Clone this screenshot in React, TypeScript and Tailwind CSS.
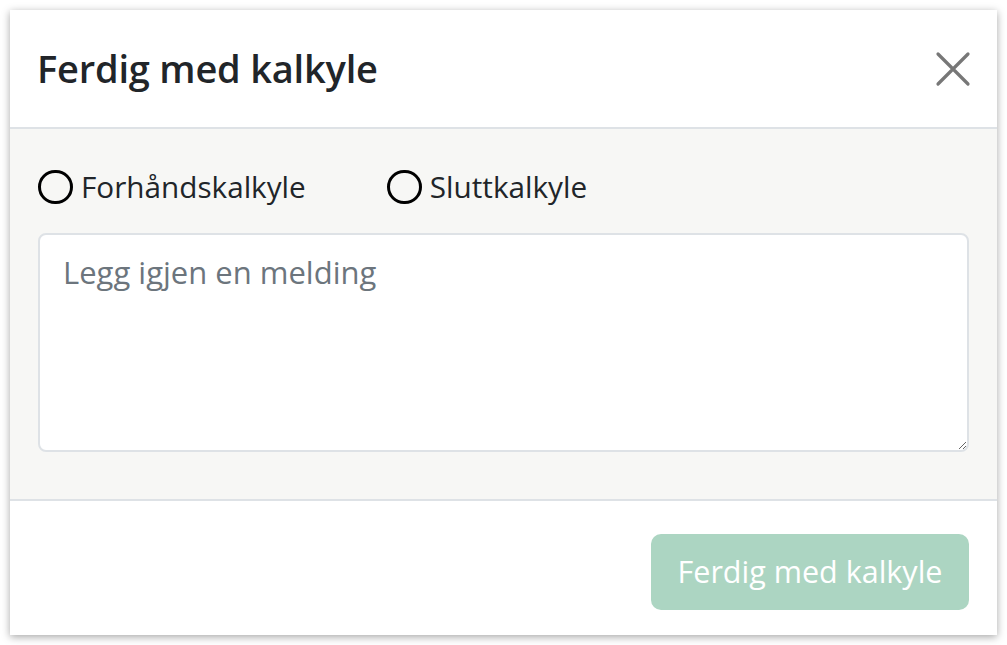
export default function App() {
  return (
    <div className="min-h-screen bg-white p-[10px] font-['Open_Sans',sans-serif]">
      <div className="flex h-[625px] w-[987px] flex-col bg-white shadow-[0_2px_8px_rgba(0,0,0,0.35)]">
        <header className="flex h-[119px] items-center justify-between border-b-2 border-[#dee2e6] pl-[27px] pr-[26px]">
          <h1 className="text-[38px] font-semibold tracking-[-0.2px] text-[#212529]">Ferdig med kalkyle</h1>
          <button type="button" aria-label="Lukk" className="text-[#777]">
            <svg width="36" height="36" viewBox="0 0 36 36" fill="none" stroke="currentColor" strokeWidth="3.2" strokeLinecap="round">
              <path d="M3 3 L33 33 M33 3 L3 33" />
            </svg>
          </button>
        </header>

        <div className="flex flex-1 flex-col gap-[23px] border-b-2 border-[#dee2e6] bg-[#f7f7f5] px-[28px] pt-[36px]">
          <div className="flex items-center gap-[81px] text-[29.7px] text-[#212529]">
            <label className="flex items-center gap-[8px]">
              <span className="h-[34px] w-[35px] rounded-full border-[3.5px] border-black" />
              Forhåndskalkyle
            </label>
            <label className="flex items-center gap-[8px]">
              <span className="h-[34px] w-[35px] rounded-full border-[3.5px] border-black" />
              Sluttkalkyle
            </label>
          </div>
          <textarea
            placeholder="Legg igjen en melding"
            className="h-[219px] w-[931px] rounded-[8px] border-2 border-[#dee2e6] bg-white px-[23px] py-[14px] text-[31px] text-[#212529] placeholder:text-[#6c757d] outline-none"
          />
        </div>

        <footer className="flex h-[134px] items-start justify-end pr-[28px] pt-[33px]">
          <button
            type="button"
            disabled
            className="h-[76px] w-[318px] rounded-[10px] bg-[#acd5c2] text-[30.5px] text-white"
          >
            Ferdig med kalkyle
          </button>
        </footer>
      </div>
    </div>
  );
}
